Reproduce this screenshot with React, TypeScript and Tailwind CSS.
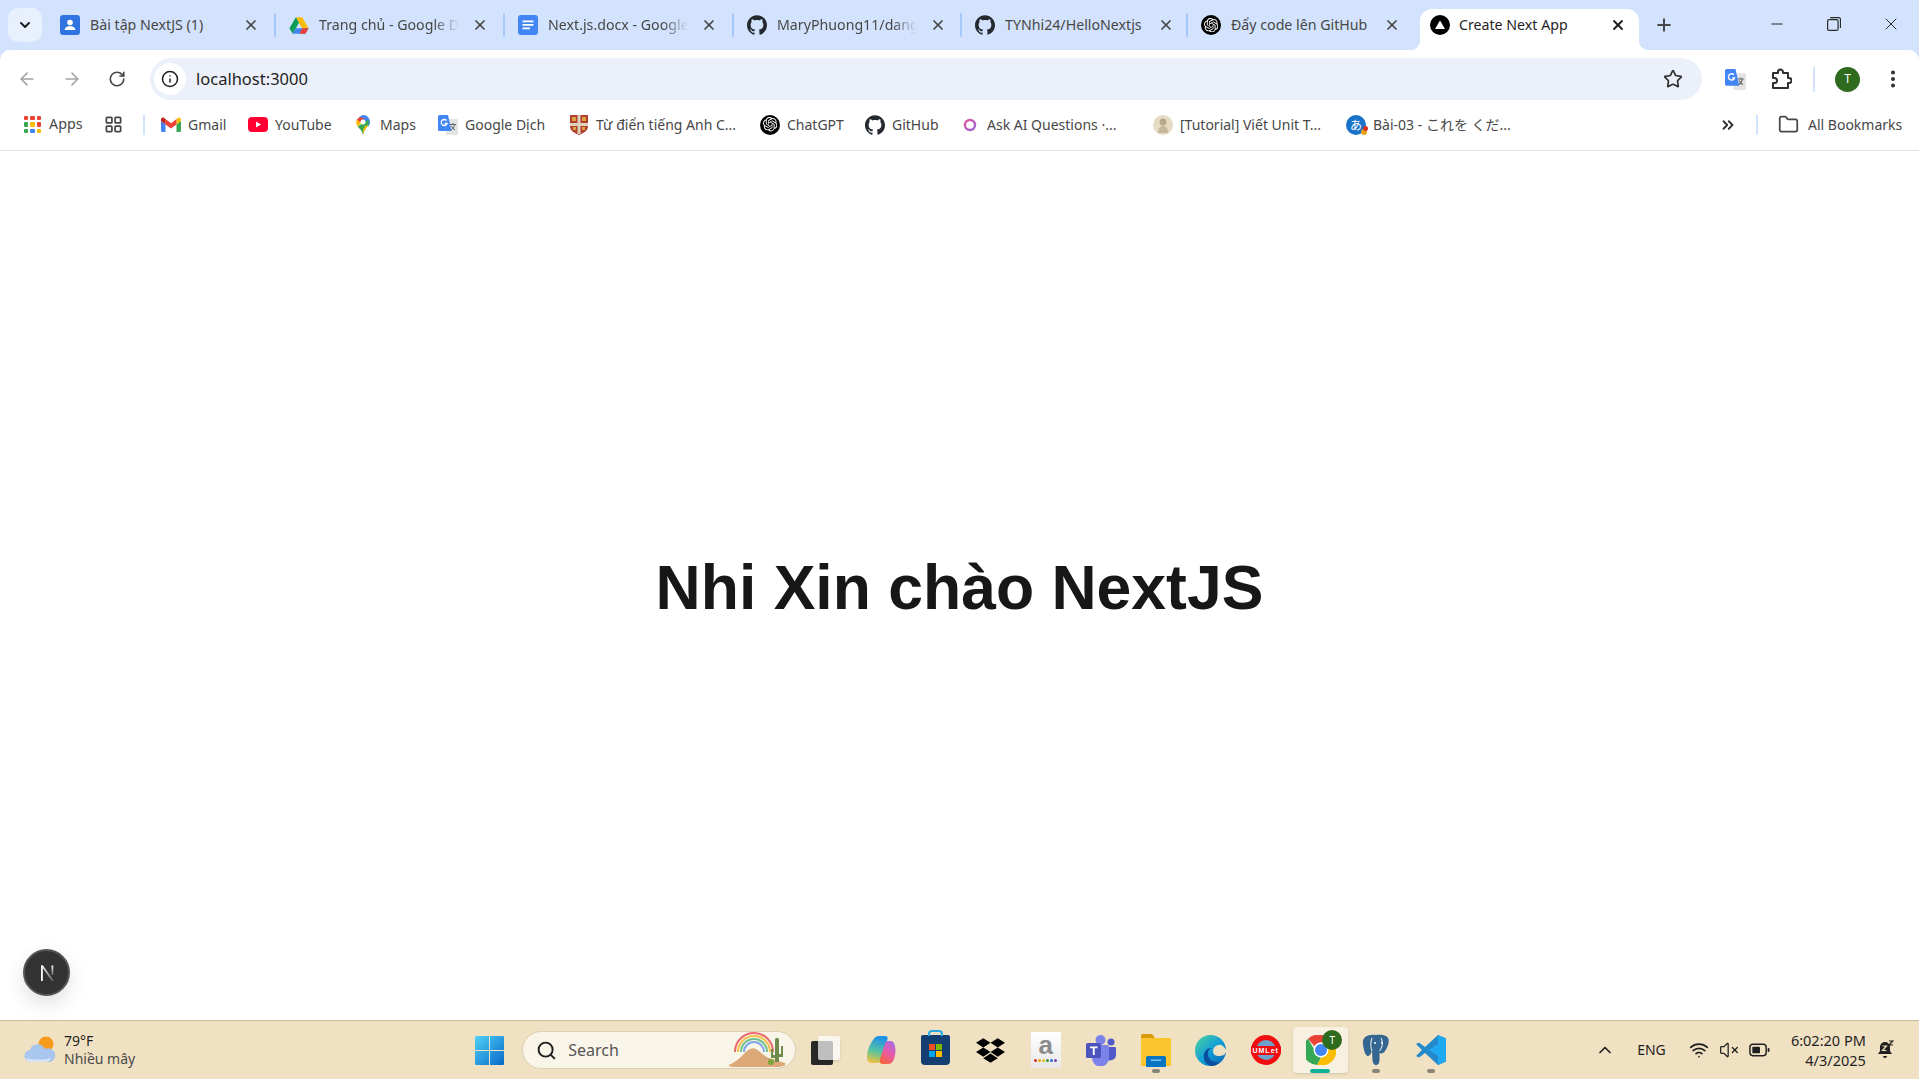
import { ArrowLeft, ArrowRight, ChevronDown, ChevronUp, ChevronsRight, EllipsisVertical, Folder, Info, LayoutGrid, Minus, Plus, RotateCw, Search, Star, VolumeX, Wifi, X } from "lucide-react";
import { SiGithub, SiOpenai, SiDropbox } from "react-icons/si";
import type { ReactNode } from "react";

const UI_FONT = "font-['Noto_Sans','Noto_Sans_CJK_JP',sans-serif]";

function DocsIcon({ className = "" }: { className?: string }) {
  return (
    <svg viewBox="0 0 20 20" className={className}>
      <rect x="0" y="0" width="20" height="20" rx="3" fill="#4285f4" />
      <path d="M4.500 5.500h11v1.800h-11zM4.500 9h11v1.800h-11zM4.500 12.500h7.500v1.800h-7.500z" fill="#fff" />
    </svg>
  );
}

function ClassroomIcon() {
  return (
    <svg viewBox="0 0 20 20" className="h-[20px] w-[20px]">
      <rect width="20" height="20" rx="3" fill="#2f74e0" />
      <circle cx="10" cy="7.500" r="2.800" fill="#fff" />
      <path d="M4.500 15c.6-3 2.800-4 5.500-4s4.900 1 5.500 4z" fill="#fff" />
    </svg>
  );
}

function DriveIcon({ className = "" }: { className?: string }) {
  return (
    <svg viewBox="0 0 22 20" className={className}>
      <path d="M7.500 1h7l7 12h-7z" fill="#fbbc04" />
      <path d="M7.500 1l-7 12 3.500 6 7-12z" fill="#0f9d58" />
      <path d="M4 19h14l3.500-6h-14z" fill="#4285f4" />
      <path d="M14.500 13h7L18 19h-6.500z" fill="#ea4335" />
    </svg>
  );
}

function NextTabIcon() {
  return (
    <svg viewBox="0 0 20 20" className="h-[20px] w-[20px]">
      <circle cx="10" cy="10" r="10" fill="#000" />
      <path d="M10 5.500l5 8.500H5z" fill="#fff" />
    </svg>
  );
}

function AppsIcon() {
  const colors = ["#ea4335", "#ea4335", "#ea4335", "#34a853", "#fbbc04", "#ea4335", "#34a853", "#4285f4", "#fbbc04"];
  return (
    <span className="grid h-[17px] w-[17px] grid-cols-3 gap-[2px]">
      {colors.map((c, i) => (
        <span key={i} className="rounded-[1px]" style={{ background: c }} />
      ))}
    </span>
  );
}

function GmailIcon() {
  return (
    <svg viewBox="0 0 20 16" className="h-[16px] w-[20px]">
      <path d="M1.500 15h3V7.500L0 4v9.500A1.500 1.500 0 0 0 1.500 15z" fill="#4285f4" />
      <path d="M15.500 15h3a1.500 1.500 0 0 0 1.500-1.500V4l-4.500 3.500z" fill="#34a853" />
      <path d="M15.500 2v5.500L20 4V2.500c0-1.700-2-2.600-3.200-1.500z" fill="#fbbc04" />
      <path d="M4.500 7.500V2L10 6.300 15.500 2v5.500L10 11.500z" fill="#ea4335" />
      <path d="M0 2.500V4l4.500 3.500V2L3.200 1C2 -.1 0 .8 0 2.500z" fill="#c5221f" />
    </svg>
  );
}

function YoutubeIcon() {
  return (
    <svg viewBox="0 0 20 15" className="h-[15px] w-[20px]">
      <rect width="20" height="15" rx="4" fill="#ff0033" />
      <path d="M8 4.500l5 3-5 3z" fill="#fff" />
    </svg>
  );
}

function MapsIcon() {
  return (
    <svg viewBox="0 0 14 20" className="h-[20px] w-[14px]">
      <path d="M7 0a7 7 0 0 1 5.400 11.400L3 2.500A7 7 0 0 1 7 0z" fill="#4285f4" />
      <path d="M3 2.500L.9 4.500 3.500 8l5-5z" fill="#ea4335" />
      <path d="M.6 4.800A7 7 0 0 0 1.700 11.500L5.500 8z" fill="#fbbc04" />
      <path d="M1.700 11.500L12.400 4.500 13 8c-.8 4-5 6-6 12-1-5-3.500-6-5.300-8.500z" fill="#34a853" />
      <path d="M9 11c-1 1.500-1.700 3-2 5 0 .6 0 2.400 0 4 1-5.500 4.200-7.700 5.400-9.800z" fill="#fbbc04" />
      <circle cx="7" cy="7" r="2.500" fill="#fff" />
    </svg>
  );
}

function TranslateIcon({ className = "" }: { className?: string }) {
  return (
    <svg viewBox="0 0 20 20" className={className}>
      <path d="M9 4h9.500a1.500 1.500 0 0 1 1.500 1.500v13a1.500 1.500 0 0 1-1.500 1.500H8z" fill="#e3e3e3" />
      <path d="M12 9.500h6M15 8v1.500M13 15c2.200-1.300 3.200-3 3.500-5.500M13.500 11c.8 1.800 2 3 3.500 4" stroke="#5f6368" strokeWidth="1" fill="none" />
      <path d="M1.500 0H10l3.500 16H1.500A1.500 1.500 0 0 1 0 14.500v-13A1.500 1.500 0 0 1 1.500 0z" fill="#4285f4" />
      <path d="M8.500 5.500a3 3 0 1 0 .6 3H6.700" stroke="#fff" strokeWidth="1.300" fill="none" />
    </svg>
  );
}

function ExtensionIcon() {
  return (
    <svg viewBox="0 0 22 22" className="h-[22px] w-[22px]" fill="none" stroke="#303030" strokeWidth="2" strokeLinejoin="round">
      <path d="M3 5h5V4a2.500 2.500 0 0 1 5 0v1h5v5h1a2.500 2.500 0 0 1 0 5h-1v5H3v-5h1.500a2.500 2.500 0 0 0 0-5H3z" />
    </svg>
  );
}

function ShieldIcon() {
  return (
    <svg viewBox="0 0 18 20" className="h-[20px] w-[18px]">
      <path d="M0 0h18v11c0 5-4.500 7-9 9-4.500-2-9-4-9-9z" fill="#b3402f" />
      <path d="M0 9.500h18M9 0v19" stroke="#ddd3bd" strokeWidth="3" />
      <rect x="2" y="2" width="4" height="4" fill="#d9a441" />
      <rect x="12" y="2" width="4" height="4" fill="#d9a441" />
      <rect x="3" y="12" width="3" height="3" fill="#d9a441" />
      <rect x="12" y="12" width="3" height="3" fill="#d9a441" />
    </svg>
  );
}

function OpenAiBadge({ className = "" }: { className?: string }) {
  return (
    <span className={`flex items-center justify-center rounded-full bg-black text-white ${className}`}>
      <SiOpenai className="h-[72%] w-[72%]" />
    </span>
  );
}

function RingIcon() {
  return (
    <svg viewBox="0 0 14 14" className="h-[14px] w-[14px]">
      <defs>
        <linearGradient id="ring" x1="0" y1="0" x2="1" y2="1">
          <stop offset="0" stopColor="#e0569c" />
          <stop offset="1" stopColor="#9a66d8" />
        </linearGradient>
      </defs>
      <circle cx="7" cy="7" r="5" fill="none" stroke="url(#ring)" strokeWidth="2.400" />
    </svg>
  );
}

function AvatarIcon() {
  return (
    <svg viewBox="0 0 20 20" className="h-[20px] w-[20px]">
      <circle cx="10" cy="10" r="10" fill="#e6dcc3" />
      <circle cx="10" cy="7" r="3.500" fill="#b9a98a" />
      <path d="M5 18c0-5 2-7 5-7s5 2 5 7z" fill="#c7b89b" />
    </svg>
  );
}

function JpIcon() {
  return (
    <span className="relative flex h-[20px] w-[20px] items-center justify-center rounded-full bg-[#1a73c9] font-['Noto_Sans_CJK_JP',sans-serif] text-[12px] leading-none text-white">
      あ
      <span className="absolute right-[-1px] bottom-[0px] h-[6px] w-[6px] rounded-full bg-[#e8a317]" />
      <span className="absolute right-[-2px] bottom-[4px] h-[5px] w-[5px] rounded-full bg-[#d93025]" />
    </span>
  );
}

function Tab({ icon, title, fade, widthClass, noSeparator }: { icon: ReactNode; title: string; fade?: boolean; widthClass: string; noSeparator?: boolean }) {
  return (
    <div className={`flex h-[36px] shrink-0 items-center ${widthClass}`}>
      <span className="ml-[13px] flex h-[20px] w-[20px] shrink-0 items-center justify-center">{icon}</span>
      <span
        className={`ml-[10px] w-[140px] shrink-0 text-[14.2px] leading-[20px] whitespace-nowrap text-[#474747] ${
          fade ? "overflow-hidden [mask-image:linear-gradient(to_right,black_82%,transparent)]" : ""
        }`}
      >
        {title}
      </span>
      <X className="ml-[13px] h-[16px] w-[16px] shrink-0 text-[#474747]" strokeWidth={2.6} />
      {!noSeparator && <span className="ml-auto h-[24px] w-[2px] rounded-full bg-[#a8c7fa]" />}
    </div>
  );
}

function Bookmark({ icon, label, className }: { icon: ReactNode; label: string; className: string }) {
  return (
    <div className={`flex shrink-0 items-center ${className}`}>
      <span className="flex w-[20px] shrink-0 items-center justify-center">{icon}</span>
      <span className="ml-[7px] text-[14px] leading-none whitespace-nowrap text-[#474747]">{label}</span>
    </div>
  );
}

function TabStrip() {
  return (
    <div className="flex h-[50px] items-end bg-[#d3e3fd]">
      <div className="mb-[8px] ml-[8px] flex h-[34px] w-[34px] items-center justify-center self-end rounded-[10px] bg-[#e9f0fd]">
        <ChevronDown className="h-[16px] w-[16px] text-[#1f1f1f]" strokeWidth={3} />
      </div>
      <div className="mb-[7px] ml-[5px] flex items-center">
        <Tab icon={<ClassroomIcon />} title="Bài tập NextJS (1)" widthClass="w-[229px]" />
        <Tab icon={<DriveIcon className="h-[19px] w-[20px]" />} title="Trang chủ - Google Drive" fade widthClass="w-[229px]" />
        <Tab icon={<DocsIcon className="h-[20px] w-[20px]" />} title="Next.js.docx - Google Docs" fade widthClass="w-[229px]" />
        <Tab icon={<SiGithub className="h-[20px] w-[20px] text-[#24292f]" />} title="MaryPhuong11/dangnhap" fade widthClass="w-[228px]" />
        <Tab icon={<SiGithub className="h-[20px] w-[20px] text-[#24292f]" />} title="TYNhi24/HelloNextjs" widthClass="w-[226px]" />
        <Tab icon={<OpenAiBadge className="h-[20px] w-[20px]" />} title="Đẩy code lên GitHub" widthClass="w-[232px]" noSeparator />
      </div>
      <div className="relative flex h-[41px] w-[219px] shrink-0 items-center self-end rounded-t-[12px] bg-white pb-[9px]">
        <span className="absolute bottom-0 left-[-10px] h-[10px] w-[10px] bg-[radial-gradient(circle_at_0_0,#d3e3fd_10px,#fff_10.500px)]" />
        <span className="absolute right-[-10px] bottom-0 h-[10px] w-[10px] bg-[radial-gradient(circle_at_100%_0,#d3e3fd_10px,#fff_10.500px)]" />
        <span className="ml-[10px] flex h-[20px] w-[20px] items-center justify-center">
          <NextTabIcon />
        </span>
        <span className="ml-[9px] w-[140px] text-[14.2px] leading-[20px] whitespace-nowrap text-[#1f1f1f]">Create Next App</span>
        <X className="ml-[11px] h-[16px] w-[16px] text-[#1f1f1f]" strokeWidth={2.8} />
      </div>
      <Plus className="mb-[15px] ml-[15px] h-[20px] w-[20px] text-[#474747]" strokeWidth={2.4} />
      <div className="mb-[16px] ml-auto flex items-center text-[#2a2a2a]">
        <Minus className="h-[18px] w-[18px]" strokeWidth={1.4} />
        <svg viewBox="0 0 14 14" className="ml-[41px] h-[14px] w-[14px]" fill="none" stroke="currentColor" strokeWidth="1.200">
          <rect x="0.600" y="2.600" width="10.500" height="10.800" rx="1.500" />
          <path d="M3.200 .6h8.300a2 2 0 0 1 2 2v8.300" />
        </svg>
        <X className="mr-[18px] ml-[40px] h-[20px] w-[20px]" strokeWidth={1.2} />
      </div>
    </div>
  );
}

function Toolbar() {
  return (
    <div className="flex h-[56px] items-center rounded-t-[10px] bg-white pt-[2px]">
      <ArrowLeft className="ml-[17px] h-[20px] w-[20px] text-[#a3a3a3]" strokeWidth={1.9} />
      <ArrowRight className="ml-[25px] h-[20px] w-[20px] text-[#a3a3a3]" strokeWidth={1.9} />
      <RotateCw className="ml-[26px] h-[18px] w-[18px] text-[#474747]" strokeWidth={2.2} />
      <div className="ml-[24px] flex h-[42px] w-[1552px] shrink-0 items-center rounded-full bg-[#ebf0fa]">
        <span className="ml-[4px] flex h-[32px] w-[32px] items-center justify-center rounded-full bg-white">
          <Info className="h-[18px] w-[18px] text-[#1f1f1f]" strokeWidth={2} />
        </span>
        <span className="ml-[10px] text-[16.5px] leading-none text-[#1f1f1f]">localhost:3000</span>
        <Star className="mr-[19px] ml-auto h-[20px] w-[20px] text-[#303030]" strokeWidth={2} />
      </div>
      <TranslateIcon className="ml-[23px] h-[21px] w-[21px]" />
      <span className="ml-[24px]">
        <ExtensionIcon />
      </span>
      <span className="ml-[21px] h-[25px] w-[2px] bg-[#d3e3fd]" />
      <span className="ml-[20px] flex h-[25px] w-[25px] items-center justify-center rounded-full bg-[#2e6b1f] text-[12px] text-white">T</span>
      <EllipsisVertical className="ml-[22px] h-[22px] w-[22px] text-[#303030]" strokeWidth={2.4} />
    </div>
  );
}

function BookmarksBar() {
  return (
    <div className="flex h-[45px] items-center border-b border-[#e3e3e3] bg-white pb-[7px]">
      <div className="ml-[24px] flex w-[60px] shrink-0 items-center">
        <AppsIcon />
        <span className="ml-[8px] text-[14.3px] leading-none text-[#474747]">Apps</span>
      </div>
      <LayoutGrid className="ml-[20px] h-[19px] w-[19px] text-[#474747]" strokeWidth={2.2} />
      <span className="ml-[20px] h-[20px] w-[2px] bg-[#d3e3fd]" />
      <Bookmark icon={<GmailIcon />} label="Gmail" className="ml-[16px] w-[68px]" />
      <Bookmark icon={<YoutubeIcon />} label="YouTube" className="ml-[19px] w-[85px]" />
      <Bookmark icon={<MapsIcon />} label="Maps" className="ml-[20px] w-[64px]" />
      <Bookmark icon={<TranslateIcon className="h-[20px] w-[20px]" />} label="Google Dịch" className="ml-[21px] w-[111px]" />
      <Bookmark icon={<ShieldIcon />} label="Từ điển tiếng Anh C..." className="ml-[20px] w-[170px]" />
      <Bookmark icon={<OpenAiBadge className="h-[20px] w-[20px]" />} label="ChatGPT" className="ml-[21px] w-[85px]" />
      <Bookmark icon={<SiGithub className="h-[20px] w-[20px] text-[#24292f]" />} label="GitHub" className="ml-[20px] w-[76px]" />
      <Bookmark icon={<RingIcon />} label="Ask AI Questions ·..." className="ml-[19px] w-[159px]" />
      <Bookmark icon={<AvatarIcon />} label="[Tutorial] Viết Unit T..." className="ml-[34px] w-[172px]" />
      <Bookmark icon={<JpIcon />} label="Bài-03 - これを くだ..." className="ml-[21px] w-[170px]" />
      <ChevronsRight className="ml-[203px] h-[18px] w-[18px] text-[#303030]" strokeWidth={2.4} />
      <span className="ml-[19px] h-[20px] w-[2px] bg-[#d3e3fd]" />
      <Folder className="ml-[20px] h-[21px] w-[21px] text-[#474747]" strokeWidth={2} />
      <span className="ml-[9px] text-[14px] leading-none whitespace-nowrap text-[#474747]">All Bookmarks</span>
    </div>
  );
}

function CloudIcon() {
  return (
    <svg viewBox="0 0 32 30" className="h-[30px] w-[32px]">
      <circle cx="22" cy="9" r="7.500" fill="#f59a1b" />
      <path d="M7 27a6 6 0 0 1-1-12 8 8 0 0 1 15-1 6.500 6.500 0 0 1 6 13z" fill="#a9c6ee" />
      <path d="M7 27a5 5 0 0 1-5-4c6 2 18 2 25 0a6 6 0 0 1-5 4z" fill="#d7e4f7" />
    </svg>
  );
}

function WindowsIcon() {
  return (
    <svg viewBox="0 0 29 29" className="h-[29px] w-[29px]">
      <defs>
        <linearGradient id="win" x1="0" y1="0" x2="1" y2="1">
          <stop offset="0" stopColor="#52d0f7" />
          <stop offset="1" stopColor="#0569c7" />
        </linearGradient>
      </defs>
      <path d="M1 0h13v14H0V1a1 1 0 0 1 1-1zM15 0h13a1 1 0 0 1 1 1v13H15zM0 15h14v14H1a1 1 0 0 1-1-1zM15 15h14v13a1 1 0 0 1-1 1H15z" fill="url(#win)" />
    </svg>
  );
}

function DesertIcon() {
  return (
    <svg viewBox="0 0 58 36" className="h-[36px] w-[58px]">
      <path d="M6 20a19 19 0 0 1 38 0" fill="none" stroke="#e96a6a" strokeWidth="2" />
      <path d="M9 20a16 16 0 0 1 32 0" fill="none" stroke="#f2c14e" strokeWidth="2" />
      <path d="M12 20a13 13 0 0 1 26 0" fill="none" stroke="#6fc28f" strokeWidth="2" />
      <path d="M15 20a10 10 0 0 1 20 0" fill="none" stroke="#7fa6ea" strokeWidth="2" />
      <path d="M0 33c6-3 10-6 14-10 4-5 9-8 13-6 5 3 9 8 13 9l16 5c2 2-2 4-8 4H8c-6 0-10-1-8-2z" fill="#dda878" />
      <path d="M46 8c0-3 4-3 4 0v22h-4zM42 17h2v6h2v3h-4zM54 14h-2v8h-2v3h4z" fill="#6f8c4c" />
      <circle cx="42" cy="30" r="3" fill="#7ea53f" />
    </svg>
  );
}

function TaskViewIcon() {
  return (
    <span className="relative block h-[29px] w-[29px]">
      <span className="absolute bottom-0 left-0 h-[24px] w-[22px] rounded-[2px] bg-[#282828]" />
      <span className="absolute top-0 right-0 h-[24px] w-[22px] rounded-[2px] bg-white/70 shadow-sm" />
    </span>
  );
}

function CopilotIcon() {
  return (
    <svg viewBox="0 0 30 30" className="h-[30px] w-[30px]">
      <defs>
        <linearGradient id="cop1" x1="0.500" y1="0" x2="0.300" y2="1">
          <stop offset="0" stopColor="#1a8fe8" />
          <stop offset="0.550" stopColor="#58c4a0" />
          <stop offset="1" stopColor="#f2c23c" />
        </linearGradient>
        <linearGradient id="cop2" x1="0.800" y1="0" x2="0.300" y2="1">
          <stop offset="0" stopColor="#a86ae6" />
          <stop offset="0.500" stopColor="#e85aa8" />
          <stop offset="1" stopColor="#f5653e" />
        </linearGradient>
      </defs>
      <path d="M13 1h6c2 0 3 1 2.500 3L15 25c-.6 2-2 3-4 3H6c-3 0-5-2-5-6 0-6 3-13 6-17 1.500-2.500 3.500-4 6-4z" fill="url(#cop1)" />
      <path d="M17 29h5c3 0 5-2 6-5 1.500-4 2-9 1-13-.6-3-2-5-4.500-5H22c-1.500 0-2.500 1-3 3l-5 15c-.6 2.500-.5 5 3 5z" fill="url(#cop2)" />
    </svg>
  );
}

function StoreIcon() {
  return (
    <span className="relative flex h-[30px] w-[29px] items-center justify-center rounded-t-[2px] rounded-b-[4px] bg-[#143f73]">
      <span className="absolute top-[-5px] left-[7px] h-[6px] w-[15px] rounded-t-[4px] border-2 border-b-0 border-[#29a8e6]" />
      <span className="grid h-[13px] w-[13px] grid-cols-2 gap-[1px]">
        <span className="bg-[#f25022]" />
        <span className="bg-[#7fba00]" />
        <span className="bg-[#00a4ef]" />
        <span className="bg-[#ffb900]" />
      </span>
    </span>
  );
}

function AmazonIcon() {
  return (
    <span className="flex h-[36px] w-[30px] flex-col items-center bg-gradient-to-b from-white to-[#e8e8e8] pt-[1px]">
      <span className="font-['Liberation_Sans',sans-serif] text-[26px] leading-[24px] font-bold text-[#8a8a8a]">a</span>
      <span className="mt-[2px] flex gap-[1px]">
        <span className="h-[3px] w-[3px] rounded-full bg-[#d93025]" />
        <span className="h-[3px] w-[3px] rounded-full bg-[#f4a30b]" />
        <span className="h-[3px] w-[3px] rounded-full bg-[#e0c020]" />
        <span className="h-[3px] w-[3px] rounded-full bg-[#3a8f3f]" />
        <span className="h-[3px] w-[3px] rounded-full bg-[#2b6fd6]" />
        <span className="h-[3px] w-[3px] rounded-full bg-[#7e3fb3]" />
      </span>
    </span>
  );
}

function TeamsIcon() {
  return (
    <svg viewBox="0 0 30 32" className="h-[32px] w-[30px]">
      <circle cx="25" cy="8" r="3.500" fill="#5059c9" />
      <path d="M20 13h9a1 1 0 0 1 1 1v7a6 6 0 0 1-10 4z" fill="#5059c9" />
      <circle cx="14.500" cy="6" r="5" fill="#7b83eb" />
      <path d="M6 11h15a2 2 0 0 1 2 2v11a8.500 8.500 0 0 1-17 0z" fill="#7b83eb" />
      <rect x="0" y="9" width="15" height="15" rx="1.500" fill="#4b53bc" />
      <path d="M4 12.500h7.500v1.800H8.700V21H6.800v-6.700H4z" fill="#fff" />
    </svg>
  );
}

function ExplorerIcon() {
  return (
    <svg viewBox="0 0 30 33" className="h-[33px] w-[30px]">
      <path d="M0 2a2 2 0 0 1 2-2h9l3 4h-14z" fill="#d99a0a" />
      <path d="M0 4h29a1 1 0 0 1 1 1v27H0z" fill="#fbc52d" />
      <path d="M5 24a2 2 0 0 1 2-2h16a2 2 0 0 1 2 2v9H5z" fill="#0a74c4" />
      <rect x="10" y="25.500" width="10" height="1.500" fill="#7fc4ee" />
    </svg>
  );
}

function EdgeIcon() {
  return (
    <svg viewBox="0 0 31 31" className="h-[31px] w-[31px]">
      <defs>
        <linearGradient id="edge" x1="0" y1="0" x2="1" y2="1">
          <stop offset="0" stopColor="#4ed59a" />
          <stop offset="0.500" stopColor="#14a1d8" />
          <stop offset="1" stopColor="#0a5fb0" />
        </linearGradient>
      </defs>
      <circle cx="15.500" cy="15.500" r="15.500" fill="url(#edge)" />
      <path d="M31 17c-1 3-4 4-7 4-4 0-6-2-6-5s2-5 5-6 6 1 8 5z" fill="#f0e1c2" />
      <path d="M16 31C10 29 8 24 9 19c1-4 4-6 8-6-3 1-4 3-4 6 0 5 5 9 11 8-2 3-5 4-8 4z" fill="#0c4f9e" />
    </svg>
  );
}

function UmletIcon() {
  return (
    <span className="relative flex h-[30px] w-[30px] items-center justify-center overflow-hidden rounded-full bg-[#f00d0d]">
      <span className="absolute h-[20px] w-[20px] rounded-full bg-[#6ea0cc]" />
      <span className="relative w-full bg-[#f00d0d] text-center font-['Liberation_Sans',sans-serif] text-[7px] leading-[9px] font-bold tracking-[1px] text-white">UMLet</span>
    </span>
  );
}

function ChromeIcon() {
  return (
    <svg viewBox="0 0 30 30" className="h-[30px] w-[30px]">
      <path d="M15 0a15 15 0 0 1 13 7.500H15a7.500 7.500 0 0 0-6.500 3.750L2 3.700A15 15 0 0 1 15 0z" fill="#ea4335" />
      <path d="M2 3.700l6.500 11.300a7.500 7.500 0 0 0 6.500 7.500L11 30A15 15 0 0 1 2 3.700z" fill="#34a853" />
      <path d="M28 7.500A15 15 0 0 1 11 30l6.500-11.250A7.500 7.500 0 0 0 15 7.500z" fill="#fbbc04" />
      <circle cx="15" cy="15" r="7.500" fill="#fff" />
      <circle cx="15" cy="15" r="6" fill="#4285f4" />
    </svg>
  );
}

function PostgresIcon() {
  return (
    <svg viewBox="0 0 28 32" className="h-[32px] w-[28px]">
      <path d="M14 1C6 0 0 3 1 10c.5 5 2 12 5 12 2 0 3-3 4-5l.5 9c.2 3 1.500 5 3.500 5s3.500-2 3.500-5v-7c2 1 4.500 0 5.500-2 2-3 4.500-8 3.500-12-1-3-5-5-13-4z" fill="#336791" />
      <path d="M10 4c-1.500 4-1.500 9 0 13M19 4c2 4 1.500 9-1.500 13" fill="none" stroke="#dfe6ec" strokeWidth="1.100" />
      <circle cx="13" cy="9" r="1" fill="#fff" />
      <circle cx="20" cy="9" r="1" fill="#fff" />
    </svg>
  );
}

function VsCodeIcon() {
  return (
    <svg viewBox="0 0 30 30" className="h-[30px] w-[30px]">
      <path d="M22 0l8 3.500v23L22 30 9 18l-6 4.500L0 21l6-6-6-6 3-1.500L9 12z" fill="#2489ca" />
      <path d="M22 0l8 3.500v23L22 30V21l-9-6 9-6z" fill="#1fa9f1" />
    </svg>
  );
}

function NextBadgeIcon() {
  return (
    <svg viewBox="0 0 20 20" className="h-[20px] w-[20px]" fill="none">
      <defs>
        <linearGradient id="nextdiag" x1="0" y1="0" x2="0" y2="1">
          <stop offset="0" stopColor="#fff" />
          <stop offset="1" stopColor="#fff" stopOpacity="0.200" />
        </linearGradient>
      </defs>
      <path d="M4 2.500h1.800V18H4z" fill="#fff" />
      <path d="M14.500 2.500h1.800V12h-1.800z" fill="url(#nextdiag)" />
      <path d="M4 2.500h2l11 15.500h-2.200z" fill="url(#nextdiag)" />
    </svg>
  );
}

function TaskIcon({ children, dot, active }: { children: ReactNode; dot?: boolean; active?: boolean }) {
  return (
    <div className={`relative flex h-[46px] w-[55px] shrink-0 items-center justify-center rounded-[4px] ${active ? "bg-white/50 shadow-sm" : ""}`}>
      {children}
      {dot && <span className="absolute bottom-[0px] left-[24px] h-[4px] w-[8px] rounded-full bg-[#8a8578]" />}
      {active && <span className="absolute bottom-[0px] left-[17px] h-[4px] w-[20px] rounded-full bg-[#10b39a]" />}
    </div>
  );
}

function Taskbar() {
  return (
    <div className="flex h-[59px] shrink-0 items-center border-t border-[#c9bb9f] bg-[#f0e1c2]">
      <div className="ml-[24px] flex items-center">
        <CloudIcon />
        <div className="ml-[8px] flex flex-col text-[14px] leading-[18px]">
          <span className="text-[#1f1f1f]">79°F</span>
          <span className="text-[#4a4a4a]">Nhiều mây</span>
        </div>
      </div>
      <div className="ml-[340px]">
        <WindowsIcon />
      </div>
      <div className="ml-[18px] flex h-[38px] w-[274px] shrink-0 items-center rounded-full border border-[#ddd0b4] bg-[#faf5e9]">
        <Search className="ml-[13px] h-[21px] w-[21px] text-[#1f1f1f]" strokeWidth={2.2} />
        <span className="ml-[11px] text-[16px] leading-none text-[#555]">Search</span>
        <span className="mr-[8px] ml-auto flex">
          <DesertIcon />
        </span>
      </div>
      <div className="ml-[2px] flex items-center">
        <TaskIcon><TaskViewIcon /></TaskIcon>
        <TaskIcon><CopilotIcon /></TaskIcon>
        <TaskIcon><StoreIcon /></TaskIcon>
        <TaskIcon><SiDropbox className="h-[29px] w-[31px] text-black" /></TaskIcon>
        <TaskIcon><AmazonIcon /></TaskIcon>
        <TaskIcon><TeamsIcon /></TaskIcon>
        <TaskIcon dot><ExplorerIcon /></TaskIcon>
        <TaskIcon><EdgeIcon /></TaskIcon>
        <TaskIcon><UmletIcon /></TaskIcon>
        <TaskIcon active>
          <ChromeIcon />
          <span className="absolute top-[3px] right-[6px] flex h-[20px] w-[20px] items-center justify-center rounded-full bg-[#2e6b1f] text-[10px] text-white">T</span>
        </TaskIcon>
        <TaskIcon dot><PostgresIcon /></TaskIcon>
        <TaskIcon dot><VsCodeIcon /></TaskIcon>
      </div>
      <ChevronUp className="ml-[137px] h-[20px] w-[20px] text-[#1f1f1f]" strokeWidth={2} />
      <span className="ml-[22px] text-[14px] leading-none text-[#1f1f1f]">ENG</span>
      <Wifi className="ml-[23px] h-[20px] w-[20px] text-[#1f1f1f]" strokeWidth={2} />
      <VolumeX className="ml-[10px] h-[20px] w-[20px] text-[#1f1f1f]" strokeWidth={1.5} />
      <svg viewBox="0 0 22 14" className="ml-[10px] h-[14px] w-[21px]" fill="none">
        <rect x="1" y="1" width="17" height="12" rx="3" stroke="#1f1f1f" strokeWidth="1.500" />
        <rect x="3.500" y="3.500" width="8" height="7" rx="1" fill="#1f1f1f" />
        <rect x="19.500" y="5" width="2" height="4" rx="1" fill="#1f1f1f" />
      </svg>
      <div className="ml-[19px] flex w-[77px] flex-col items-end text-[14.5px] leading-[20px] whitespace-nowrap text-[#1f1f1f]">
        <span>6:02:20 PM</span>
        <span>4/3/2025</span>
      </div>
      <svg viewBox="0 0 18 20" className="ml-[10px] h-[20px] w-[18px]">
        <path d="M9 2a5 5 0 0 0-5 5v4l-2 3h14l-2-3V7a5 5 0 0 0-5-5z" fill="#1f1f1f" />
        <path d="M7 16h4a2 2 0 0 1-4 0z" fill="#1f1f1f" />
        <path d="M6.500 6h4l-4 4.500h4" fill="none" stroke="#f0e1c2" strokeWidth="1.200" />
        <path d="M13 1h4l-4 4h4" fill="none" stroke="#1f1f1f" strokeWidth="1.200" />
      </svg>
    </div>
  );
}

export default function App() {
  return (
    <div className={`flex h-[1079px] w-[1919px] flex-col overflow-hidden bg-white ${UI_FONT}`}>
      <TabStrip />
      <div className="bg-[#d3e3fd]">
        <Toolbar />
      </div>
      <BookmarksBar />
      <main className="relative flex flex-1 items-center justify-center pt-[3px]">
        <h1 className="font-['Liberation_Sans',sans-serif] text-[62.5px] leading-none font-bold text-[#171717]">Nhi Xin chào NextJS</h1>
        <div className="absolute bottom-[24px] left-[23px] flex h-[47px] w-[47px] items-center justify-center rounded-full border-2 border-[#555] bg-[#333] shadow-[0_8px_20px_rgba(0,0,0,0.12)]">
          <NextBadgeIcon />
        </div>
      </main>
      <Taskbar />
    </div>
  );
}
